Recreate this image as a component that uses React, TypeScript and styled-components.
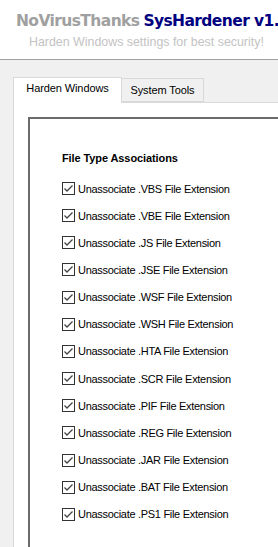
import * as React from 'react'
import styled, { createGlobalStyle } from 'styled-components'

const GlobalStyle = createGlobalStyle`
    html, body {
        margin: 0;
        padding: 0;
        background: #f0f0f0;
        overflow: hidden;
    }
    body {
        font-family: "Liberation Sans", Arial, sans-serif;
    }
`

const extensions = ['VBS', 'VBE', 'JS', 'JSE', 'WSF', 'WSH', 'HTA', 'SCR', 'PIF', 'REG', 'JAR', 'BAT', 'PS1']

const CheckBox = () => (
    <Box>
        <svg width="13" height="13" viewBox="0 0 13 13">
            <rect x="0.5" y="0.5" width="12" height="12" fill="#fff" stroke="#333" />
            <path d="M2.5 6.5 L5 9 L10.5 3.5" fill="none" stroke="#444" strokeWidth="1.3" />
        </svg>
    </Box>
)

const App = () => {
    return (
        <Page>
            <GlobalStyle />
            <Header>
                <Title>
                    <Brand>NoVirusThanks</Brand>
                    <Product>SysHardener v1.</Product>
                </Title>
                <Subtitle>Harden Windows settings for best security!</Subtitle>
            </Header>
            <Body>
                <Tabs>
                    <Tab active>Harden Windows</Tab>
                    <Tab>System Tools</Tab>
                </Tabs>
                <Panel>
                    <Group>
                        <Heading>File Type Associations</Heading>
                        <List>
                            {extensions.map(ext => (
                                <Row key={ext}>
                                    <CheckBox />
                                    <Label>Unassociate .{ext} File Extension</Label>
                                </Row>
                            ))}
                        </List>
                    </Group>
                </Panel>
            </Body>
        </Page>
    )
}

const Page = styled.div`
    width: 278px;
    height: 547px;
    overflow: hidden;
    display: flex;
    flex-direction: column;
`

const Header = styled.div`
    background: #fff;
    height: 60px;
    border-bottom: 1px solid #a0a0a0;
    padding-left: 16px;
    box-sizing: border-box;
    white-space: nowrap;
    overflow: hidden;
`

const Title = styled.div`
    padding-top: 12px;
    font-family: "DejaVu Sans", Verdana, sans-serif;
    font-weight: bold;
    font-size: 15.5px;
    letter-spacing: -0.6px;
    display: flex;
    gap: 4px;
    line-height: 18px;
`

const Brand = styled.span`
    color: #a0a0a0;
`

const Product = styled.span`
    color: #000080;
`

const Subtitle = styled.div`
    margin-top: 5px;
    padding-left: 13px;
    font-size: 12.4px;
    line-height: 15px;
    color: #c3c3c3;
`

const Body = styled.div`
    flex: 1;
    padding: 16px 0 0 13px;
    display: flex;
    flex-direction: column;
    min-height: 0;
`

const Tabs = styled.div`
    display: flex;
    align-items: flex-end;
    height: 26px;
    position: relative;
    z-index: 1;
`

const Tab = styled.div<{ active?: boolean }>`
    box-sizing: border-box;
    width: ${p => (p.active ? '109px' : '82px')};
    height: ${p => (p.active ? '26px' : '24px')};
    padding-top: ${p => (p.active ? '4px' : '5px')};
    margin-bottom: ${p => (p.active ? '-1px' : '0')};
    text-align: center;
    background: ${p => (p.active ? '#fff' : '#f0f0f0')};
    border: 1px solid #d9d9d9;
    border-bottom: ${p => (p.active ? 'none' : '1px solid #d9d9d9')};
    border-left: ${p => (p.active ? '1px solid #d9d9d9' : 'none')};
    font-size: 11px;
    letter-spacing: -0.1px;
    color: #000;
`

const Panel = styled.div`
    flex: 1;
    background: #fff;
    border-left: 1px solid #d9d9d9;
    border-top: 1px solid #d9d9d9;
    padding: 14px 0 0 14px;
    min-height: 0;
`

const Group = styled.div`
    height: 100%;
    border-left: 2px solid #6b6b6b;
    border-top: 2px solid #6b6b6b;
    padding: 33px 0 0 32px;
    box-sizing: border-box;
`

const Heading = styled.div`
    font-weight: bold;
    font-size: 11px;
    letter-spacing: -0.1px;
    color: #000;
    margin-bottom: 18px;
`

const List = styled.div`
    display: flex;
    flex-direction: column;
    gap: 14.17px;
`

const Row = styled.div`
    display: flex;
    align-items: center;
    height: 13px;
    gap: 3px;
`

const Box = styled.span`
    display: flex;
    width: 13px;
    height: 13px;
`

const Label = styled.span`
    font-size: 11px;
    letter-spacing: -0.3px;
    color: #000;
    white-space: nowrap;
`

export default App
